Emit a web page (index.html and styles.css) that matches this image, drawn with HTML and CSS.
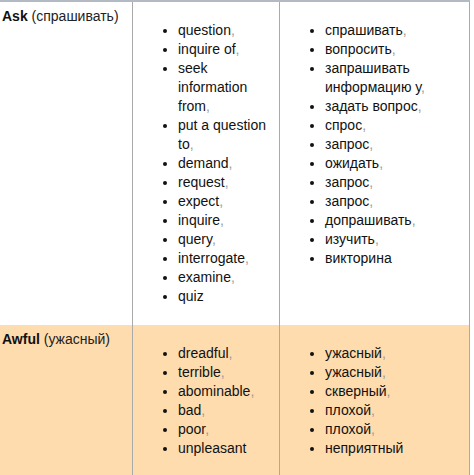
FILE: index.html
```html
<!DOCTYPE html>
<html>
<head>
<meta charset="utf-8">
<link rel="stylesheet" href="styles.css">
</head>
<body>
<table class="words">
  <colgroup>
    <col class="c-word">
    <col class="c-en">
    <col class="c-ru">
  </colgroup>
  <tr class="row">
    <td class="term"><b>Ask</b> (спрашивать)</td>
    <td class="syn">
      <ul>
        <li>question<span class="sep">,</span></li>
        <li>inquire of<span class="sep">,</span></li>
        <li>seek information from<span class="sep">,</span></li>
        <li>put a question to<span class="sep">,</span></li>
        <li>demand<span class="sep">,</span></li>
        <li>request<span class="sep">,</span></li>
        <li>expect<span class="sep">,</span></li>
        <li>inquire<span class="sep">,</span></li>
        <li>query<span class="sep">,</span></li>
        <li>interrogate<span class="sep">,</span></li>
        <li>examine<span class="sep">,</span></li>
        <li>quiz</li>
      </ul>
    </td>
    <td class="syn">
      <ul>
        <li>спрашивать<span class="sep">,</span></li>
        <li>вопросить<span class="sep">,</span></li>
        <li>запрашивать информацию у<span class="sep">,</span></li>
        <li>задать вопрос<span class="sep">,</span></li>
        <li>спрос<span class="sep">,</span></li>
        <li>запрос<span class="sep">,</span></li>
        <li>ожидать<span class="sep">,</span></li>
        <li>запрос<span class="sep">,</span></li>
        <li>запрос<span class="sep">,</span></li>
        <li>допрашивать<span class="sep">,</span></li>
        <li>изучить<span class="sep">,</span></li>
        <li>викторина</li>
      </ul>
    </td>
  </tr>
  <tr class="row row-alt">
    <td class="term"><b>Awful</b> (ужасный)</td>
    <td class="syn">
      <ul>
        <li>dreadful<span class="sep">,</span></li>
        <li>terrible<span class="sep">,</span></li>
        <li>abominable<span class="sep">,</span></li>
        <li>bad<span class="sep">,</span></li>
        <li>poor<span class="sep">,</span></li>
        <li>unpleasant</li>
      </ul>
    </td>
    <td class="syn">
      <ul>
        <li>ужасный<span class="sep">,</span></li>
        <li>ужасный<span class="sep">,</span></li>
        <li>скверный<span class="sep">,</span></li>
        <li>плохой<span class="sep">,</span></li>
        <li>плохой<span class="sep">,</span></li>
        <li>неприятный</li>
      </ul>
    </td>
  </tr>
</table>
</body>
</html>
```

FILE: styles.css
```css
html, body {
  margin: 0;
  padding: 0;
  background: #ffffff;
}

body {
  font-family: "Liberation Sans", Arial, sans-serif;
  font-size: 14px;
  line-height: 19px;
  color: #222222;
}

.words {
  border-collapse: separate;
  border-spacing: 0;
  table-layout: fixed;
  width: 470px;
  border-top: 2px solid #b4bac4;
}

.c-word { width: 133px; }
.c-en { width: 147px; }
.c-ru { width: 190px; }

.words td {
  box-sizing: border-box;
  vertical-align: top;
  border-right: 1px solid #aaaaaa;
  padding: 5px 5px 5px 2px;
}

.words td.syn {
  padding-left: 5px;
}

.row-alt td {
  background: #fedcae;
}

.term b {
  font-weight: bold;
  color: #111111;
}

.syn ul {
  margin: 14px 0;
  padding-left: 40px;
}

.syn li {
  color: #111111;
}

.sep {
  color: #9a9a9a;
}
```
